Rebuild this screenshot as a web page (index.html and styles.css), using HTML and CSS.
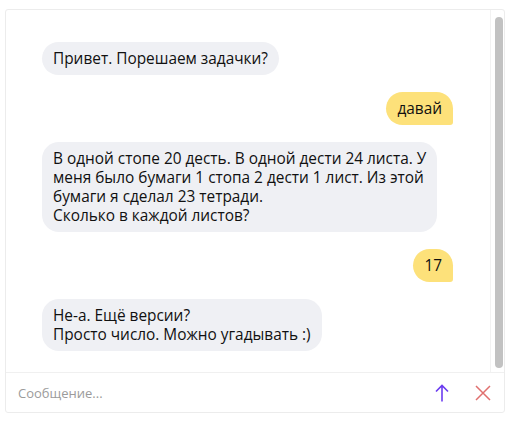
FILE: index.html
```html
<!DOCTYPE html>
<html lang="ru">
<head>
<meta charset="utf-8">
<link rel="stylesheet" href="styles.css">
</head>
<body>
<div class="chat">
  <div class="body">
    <div class="messages">
      <div class="msg bot">Привет. Порешаем задачки?</div>
      <div class="msg user">давай</div>
      <div class="msg bot">В одной стопе 20 десть. В одной дести 24 листа. У<br>меня было бумаги 1 стопа 2 дести 1 лист. Из этой<br>бумаги я сделал 23 тетради.<br>Сколько в каждой листов?</div>
      <div class="msg user">17</div>
      <div class="msg bot">Не-а. Ещё версии?<br>Просто число. Можно угадывать :)</div>
    </div>
    <div class="scroll"><div class="thumb"></div></div>
  </div>
  <div class="input">
    <span class="placeholder">Сообщение...</span>
    <svg class="send" width="14" height="18" viewBox="0 0 14 18"><path d="M7 17.5V1.5M1 7.5L7 1.5L13 7.5" fill="none" stroke="#6b3cf0" stroke-width="1.6"/></svg>
    <svg class="close" width="16" height="16" viewBox="0 0 16 16"><path d="M1 1L15 15M15 1L1 15" fill="none" stroke="#e0706f" stroke-width="1.5"/></svg>
  </div>
</div>
</body>
</html>
```
FILE: styles.css
```css
html, body { margin: 0; padding: 0; background: #fff; }
body { padding: 9px 6px 0 5px; font-family: "Open Sans", "Noto Sans", sans-serif; color: #111; }
.chat { width: 500px; height: 404px; box-sizing: border-box; border: 1px solid #ececec; border-radius: 3px; display: flex; flex-direction: column; }
.body { flex: 1; display: flex; border-bottom: 1px solid #f0f0f0; min-height: 0; }
.messages { flex: 1; display: flex; flex-direction: column; align-items: flex-start; gap: 17px; padding: 32px 37px 0 36px; }
.msg { font-size: 15.4px; line-height: 19px; padding: 7px 11px; border-radius: 17px; background: #eff0f4; }
.msg.user { align-self: flex-end; background: #fde17a; border-bottom-right-radius: 3px; }
.scroll { width: 14px; padding: 7px 2px 4px 2px; box-sizing: border-box; border-left: 1px solid #f2f2f2; }
.thumb { width: 8px; height: 100%; background: #c2c2c2; border-radius: 4px; margin-left: 2px; }
.input { height: 39px; display: flex; align-items: center; padding: 0 13px 0 12px; }
.placeholder { flex: 1; color: #9b9b9b; font-size: 13px; }
.send { margin-right: 26px; }
```
